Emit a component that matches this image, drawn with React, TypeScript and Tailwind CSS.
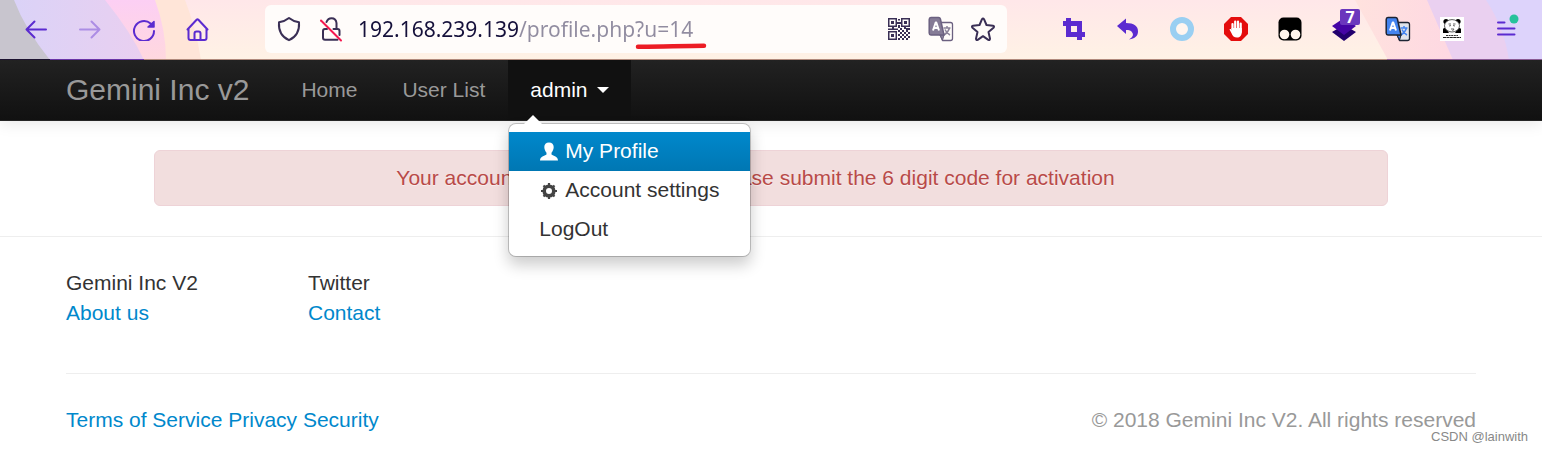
import { useState } from 'react';
import type { ReactNode } from 'react';

const ThemeArt = () => (
  <div className="absolute inset-0 overflow-hidden bg-linear-to-b from-[#ffe7e9] to-[#fff2e5] flex justify-between" aria-hidden="true">
    <svg width="204" height="60" viewBox="0 0 204 60" className="shrink-0">
      <defs>
        <linearGradient id="lavender" x1="0" y1="0" x2="1" y2="0">
          <stop offset="0" stopColor="#d9d3f8" />
          <stop offset="1" stopColor="#e9cff0" />
        </linearGradient>
        <linearGradient id="pink" x1="0" y1="0" x2="0" y2="1">
          <stop offset="0" stopColor="#fccff4" />
          <stop offset="1" stopColor="#ffd8de" />
        </linearGradient>
      </defs>
      <path d="M0 0H185Q196 28 201 60H0Z" fill="#ffe5d8" />
      <path d="M0 0H155Q166 30 166 60H0Z" fill="url(#pink)" />
      <path d="M0 0H105Q131 32 144 60H0Z" fill="url(#lavender)" />
      <path d="M0 0H14Q25 29 50 60H0Z" fill="#c8c5ce" />
    </svg>
    <svg width="192" height="60" viewBox="0 0 192 60" className="shrink-0">
      <defs>
        <linearGradient id="rose" x1="0" y1="0" x2="1" y2="0">
          <stop offset="0" stopColor="#ffe2de" />
          <stop offset="1" stopColor="#fdcfe6" />
        </linearGradient>
      </defs>
      <path d="M5 0H192V60H38Z" fill="url(#rose)" />
      <path d="M77 0H192V60H103Z" fill="#ead0f0" />
      <path d="M136 0H192V60H159Q154 27 136 0Z" fill="#ddd3fb" />
    </svg>
    <div className="absolute inset-x-0 bottom-0 h-px bg-[#b18a7c]" />
    <div className="absolute left-0 bottom-0 h-px w-[50px] bg-[#1c1230]" />
    <div className="absolute left-[50px] bottom-0 h-px w-[94px] bg-[#6b35a8]" />
    <div className="absolute right-0 bottom-0 h-px w-[155px] bg-[#8a5a94]" />
  </div>
);

const ToolButton = ({ label, children }: { label: string; children: ReactNode }) => (
  <button type="button" aria-label={label} className="flex h-12 w-[54px] shrink-0 items-center justify-center">
    {children}
  </button>
);

const FieldButton = ({ label, children }: { label: string; children: ReactNode }) => (
  <button type="button" aria-label={label} className="flex h-12 w-[42px] shrink-0 items-center justify-center">
    {children}
  </button>
);

const line = { fill: 'none', strokeLinecap: 'round', strokeLinejoin: 'round', strokeWidth: 2 } as const;

const Back = () => (
  <svg width="24" height="24" viewBox="0 0 24 24" stroke="#5b2bd0" {...line}>
    <path d="M22 12.500H2.500M10.500 4.500L2.500 12.500L10.500 20.500" />
  </svg>
);

const Forward = () => (
  <svg width="24" height="24" viewBox="0 0 24 24" stroke="#5b2bd0" opacity=".4" {...line}>
    <path d="M2 12.500H21.500M13.500 4.500L21.500 12.500L13.500 20.500" />
  </svg>
);

const Reload = () => (
  <svg width="24" height="24" viewBox="0 0 24 24" stroke="#5b2bd0" {...line}>
    <path d="M22 14A10 10 0 1 1 18.600 6.500" />
    <path d="M22 4.500V10H16Z" fill="#5b2bd0" strokeWidth="1.500" />
  </svg>
);

const Home = () => (
  <svg width="24" height="24" viewBox="0 0 24 24" stroke="#5b2bd0" {...line}>
    <path d="M1.500 12.500L10.600 2.800Q11.500 2 12.400 2.800L21.500 12.500M2.500 11.500V21A2 2 0 0 0 4.500 23H18.500A2 2 0 0 0 20.500 21V11.500M8.500 22.500V16.500A2 2 0 0 1 10.500 14.500H12.500A2 2 0 0 1 14.500 16.500V22.500" />
  </svg>
);

const Shield = () => (
  <svg width="24" height="26" viewBox="0 0 24 26" stroke="#3a2f55" {...line}>
    <path d="M12 2C9 4.500 6 5.600 2 6.200C1.500 13 4 20.500 12 24.200C20 20.500 22.500 13 22 6.200C18 5.600 15 4.500 12 2Z" />
  </svg>
);

const LockOff = () => (
  <svg width="24" height="26" viewBox="0 0 24 26" stroke="#3a2f55" {...line}>
    <path d="M7.500 6Q9 2.200 12.500 2.200Q17 2.200 17.500 7V12.500" />
    <path d="M14.500 13H18.500A2 2 0 0 1 20.500 15V19M8 13H6A2 2 0 0 0 4 15V21.800A2 2 0 0 0 6 23.800H18.500" />
    <path d="M2 4.500L22 24.500" stroke="#f5174f" />
  </svg>
);

const QrCode = () => (
  <svg width="22" height="22" viewBox="0 0 22 22" fill="#3a2f55">
    <path fillRule="evenodd" d="M0 0H9V9H0ZM1.500 1.500V7.500H7.500V1.500ZM13 0H22V9H13ZM14.500 1.500V7.500H20.500V1.500ZM0 13H9V22H0ZM1.500 14.500V20.500H7.500V14.500Z" />
    <path d="M3 3H6V6H3ZM16 3H19V6H16ZM3 16H6V19H3ZM10 1H12V2.500H10ZM9 4H13V6H9ZM10 7H12V10H10ZM4 9H6V11H4ZM16 9H18V11H16ZM0 10.500H10V12H0ZM12 10H14V12H12ZM18 10H22V12H18ZM10 12H12V14H10ZM14 12H16V14H14ZM18 12H20V14H18ZM12 14H14V16H12ZM16 14H18V16H16ZM20 14H22V16H20ZM10 16H12V18H10ZM14 16H16V18H14ZM18 16H20V18H18ZM12 18H14V20H12ZM16 18H18V20H16ZM20 18H22V20H20ZM10 20H12V22H10ZM14 20H16V22H14ZM18 20H20V22H18Z" />
  </svg>
);

const Translate = ({ front, back, edge, mark }: { front: string; back: string; edge: string; mark: string }) => (
  <svg width="26" height="26" viewBox="0 0 26 26" strokeLinejoin="round">
    <path d="M11 6.500H22.500A2 2 0 0 1 24.500 8.500V22.500A2 2 0 0 1 22.500 24.500H14.500L11 16Z" fill={back} stroke={edge} strokeWidth="1.300" />
    <path d="M15.500 12H22.500M19 10V12M21.500 12C20.500 15.500 18.500 17.500 16 19M17 13.500C18 16 20 18 22 19" fill="none" stroke={mark} strokeWidth="1.500" />
    <path d="M12 19H16L14.500 24.200Z" fill={mark} stroke={edge} strokeWidth="1" />
    <path d="M3 1.500H10.500A2 2 0 0 1 12.400 3L16 19H3A2 2 0 0 1 1.200 17V3.500A2 2 0 0 1 3 1.500Z" fill={front} stroke={edge} strokeWidth="1.500" />
    <path d="M5 14.500L7.700 6.500H8.300L11 14.500M6 12H10" fill="none" stroke="#fff" strokeWidth="2" />
  </svg>
);

const Star = () => (
  <svg width="26" height="26" viewBox="0 0 26 26" stroke="#3a2f55" {...line}>
    <path d="M12 3.200Q13 1.600 14 3.200L16.500 9L23 9.800Q24.800 10.300 23.500 11.700L18.500 16L20 22.600Q20 24.500 18.300 23.800L13 20.200L7.700 23.800Q6 24.500 6 22.600L7.500 16L2.500 11.700Q1.200 10.300 3 9.800L9.500 9Z" />
  </svg>
);

const Crop = () => (
  <svg width="22" height="22" viewBox="0 0 22 22" fill="#5b2bd0">
    <path fillRule="evenodd" d="M3 0H8V3H19V14H22V19H19V22H14V19H3V8H0V3H3ZM8 8V14H14V8Z" />
  </svg>
);

const Undo = () => (
  <svg width="22" height="22" viewBox="0 0 22 22" fill="#5b2bd0">
    <path d="M0 8L9 0.500V5C17 5 21 8 21 13.500C21 18 18 20.500 12 21.500C16 19 16.500 17 15.500 15C14.500 12.500 12 12 9 12V16Z" />
  </svg>
);

const Ring = () => (
  <svg width="26" height="26" viewBox="0 0 26 26">
    <circle cx="13" cy="13" r="9" fill="#fff5ef" stroke="#9acff2" strokeWidth="6" />
  </svg>
);

const StopHand = () => (
  <svg width="24" height="24" viewBox="0 0 24 24">
    <path d="M7 0H17L24 7V17L17 24H7L0 17V7Z" fill="#e40d0d" />
    <path d="M8.500 7V14M11.200 4.500V13M14 4.500V13M16.700 6.500V15" stroke="#fff" strokeWidth="2.200" strokeLinecap="round" />
    <path d="M7.400 11H17.800V15C17.800 18.500 16 20.500 13 20.500C10 20.500 8.600 19 7.400 16L5.500 12.500C6.500 11.500 7 12.300 8 13.500Z" fill="#fff" />
  </svg>
);

const Monkey = () => (
  <svg width="24" height="24" viewBox="0 0 24 24">
    <rect x=".5" y=".5" width="23" height="23" rx="5" fill="#000" />
    <circle cx="6.500" cy="17.500" r="4.800" fill="#fff5ec" />
    <circle cx="17.500" cy="17.500" r="4.800" fill="#fff5ec" />
  </svg>
);

const Layers = () => (
  <svg width="24" height="24" viewBox="0 0 24 24">
    <path d="M0 15L12 8L24 15L12 24Z" fill="#22006e" />
    <path d="M0 9L12 1L24 9L12 18Z" fill="#4505a5" />
  </svg>
);

const Panda = () => (
  <svg width="24" height="24" viewBox="0 0 24 24">
    <rect width="24" height="24" fill="#fff" />
    <circle cx="6" cy="4.500" r="2.600" />
    <circle cx="18" cy="4.500" r="2.600" />
    <path d="M3 16V12Q4 10.500 6 11.500L9 16ZM21 16V12Q20 10.500 18 11.500L15 16Z" />
    <ellipse cx="12" cy="8.800" rx="7.500" ry="6.200" fill="#fff" stroke="#333" strokeWidth=".8" />
    <path d="M8.500 7H11M13 7H15.500M9 9L11 8.500M13 8.500L15 9M11 12H14L12.500 14" fill="none" stroke="#666" strokeWidth="1" />
    <path d="M6 18.500H18" stroke="#333" strokeWidth="1" strokeDasharray="2 .6" />
    <path d="M3 20.500H21" stroke="#222" strokeWidth="1.200" strokeDasharray="3 .4" />
  </svg>
);

const Menu = () => (
  <svg width="24" height="24" viewBox="0 0 24 24" className="overflow-visible" stroke="#5b2bd0" {...line}>
    <path d="M4 5.500H10.500M4 11.500H20.500M4 17.500H20.500" />
    <circle cx="20" cy="2" r="4.500" fill="#26c29b" stroke="none" />
  </svg>
);

const UserIcon = () => (
  <svg width="21" height="21" viewBox="0 0 21 21" fill="#fff">
    <path d="M10 1.500C13 1.500 14.700 3.300 14.700 6C14.700 8.500 13.500 10.500 12.500 11.800V13.500C14.500 15 19 15.500 19 19.500H1C1 15.500 5.500 15 7.500 13.500V11.800C6.500 10.500 5.300 8.500 5.300 6C5.300 3.300 7 1.500 10 1.500Z" />
  </svg>
);

const CogIcon = () => (
  <svg width="21" height="21" viewBox="0 0 21 21" fill="none" stroke="#444">
    <circle cx="10" cy="11" r="4.800" strokeWidth="3.600" />
    <path d="M10 3V6M10 16V19M2 11H5M15 11H18M4.500 5.500L6.500 7.500M13.500 14.500L15.500 16.500M4.500 16.500L6.500 14.500M13.500 7.500L15.500 5.500" strokeWidth="2.200" />
  </svg>
);

const BrowserBar = () => {
  const [url, setUrl] = useState('192.168.239.139/profile.php?u=14');

  return (
    <div className="relative h-[60px]">
      <ThemeArt />
      <div className="relative flex items-center gap-10 px-[9px] pt-[5px]">
        <div className="flex">
          <ToolButton label="Back"><Back /></ToolButton>
          <ToolButton label="Forward"><Forward /></ToolButton>
          <ToolButton label="Reload"><Reload /></ToolButton>
          <ToolButton label="Home"><Home /></ToolButton>
        </div>
        <div className="relative flex h-12 min-w-0 flex-1 items-center rounded-md bg-[#fffcfa] px-[3px]">
          <FieldButton label="Tracking protection"><Shield /></FieldButton>
          <FieldButton label="Connection not secure"><LockOff /></FieldButton>
          <input
            type="text"
            aria-label="Address"
            value={url}
            onChange={(e) => setUrl(e.target.value)}
            className="ml-1.5 h-10 min-w-0 flex-1 bg-linear-to-r from-[#15103a] from-[161px] to-[#918ca0] to-[161px] bg-clip-text font-['Noto_Sans',sans-serif] text-[21px] text-transparent outline-none"
          />
          <svg width="72" height="8" viewBox="0 0 72 8" className="absolute left-[370px] top-[37px]" aria-hidden="true">
            <path d="M3 4.800C20 5 45 4 69 3.800" fill="none" stroke="#ec1c24" strokeWidth="4.500" strokeLinecap="round" />
          </svg>
          <FieldButton label="QR code"><QrCode /></FieldButton>
          <FieldButton label="Translate page">
            <Translate front="#857b96" back="#fffcfa" edge="#6b6080" mark="#8b8299" />
          </FieldButton>
          <FieldButton label="Bookmark"><Star /></FieldButton>
        </div>
        <div className="flex">
          <ToolButton label="Crop"><Crop /></ToolButton>
          <ToolButton label="Undo"><Undo /></ToolButton>
          <ToolButton label="Proxy"><Ring /></ToolButton>
          <ToolButton label="Ad blocker"><StopHand /></ToolButton>
          <ToolButton label="User scripts"><Monkey /></ToolButton>
          <ToolButton label="Technologies">
            <span className="relative">
              <Layers />
              <span className="absolute -top-2 left-2 flex h-4 w-5 items-center justify-center rounded-xs bg-[#6b37bd] font-['Open_Sans',sans-serif] text-base leading-4 font-bold text-white">
                7
              </span>
            </span>
          </ToolButton>
          <ToolButton label="Translate">
            <Translate front="#4384f0" back="#e0e3ea" edge="#1d2433" mark="#4384f0" />
          </ToolButton>
          <ToolButton label="Panda"><Panda /></ToolButton>
          <ToolButton label="Menu"><Menu /></ToolButton>
        </div>
      </div>
    </div>
  );
};

const UserMenu = () => (
  <div className="absolute left-0 top-[63px] z-10 w-max min-w-[243px] rounded-lg border border-black/20 bg-white bg-clip-padding pt-2 pb-[7px] text-[#333] shadow-[0_8px_15px_rgba(0,0,0,0.2)]">
    <svg width="18" height="9" viewBox="0 0 18 9" className="absolute -top-[9px] left-[15px]" aria-hidden="true">
      <path d="M0 9L9 0L18 9Z" fill="#fff" />
    </svg>
    <a href="#profile" className="flex h-[39px] items-center gap-[5px] bg-linear-to-b from-[#0088cc] to-[#0077b3] px-[30px] pb-px text-white">
      <UserIcon />
      My Profile
    </a>
    <a href="#settings" className="flex h-[39px] items-center gap-[5px] px-[30px] pb-px">
      <CogIcon />
      Account settings
    </a>
    <a href="#logout" className="flex h-[39px] items-center px-[30px] pb-px">LogOut</a>
  </div>
);

const Navbar = () => {
  const [open, setOpen] = useState(true);

  return (
    <nav className="border-b border-[#252525] bg-linear-to-b from-[#222] to-[#111] px-[66px] text-[#999] shadow-[0_2px_15px_rgba(0,0,0,0.1)]">
      <div className="mx-auto flex h-[60px] max-w-[1410px] items-center">
        <a href="#top" className="mr-[30px] text-[30px]">Gemini Inc v2</a>
        <div className="flex gap-px">
          <a href="#home" className="px-[22px] py-[15px]">Home</a>
          <a href="#users" className="px-[22px] py-[15px]">User List</a>
          <div className="relative">
            <button
              type="button"
              aria-expanded={open}
              onClick={() => setOpen(!open)}
              className="flex items-center gap-[9px] bg-[#111] px-[22px] py-[15px] text-white"
            >
              admin
              <svg width="12" height="6" viewBox="0 0 12 6" aria-hidden="true">
                <path d="M0 0H12L6 6Z" fill="#fff" />
              </svg>
            </button>
            {open && <UserMenu />}
          </div>
        </div>
      </div>
    </nav>
  );
};

export default function App() {
  return (
    <div className="relative bg-white font-['Liberation_Sans',Arial,sans-serif] text-[21px] leading-[30px] text-[#333]">
      <BrowserBar />
      <Navbar />
      <main className="px-[66px] pt-[29px] pb-[30px]">
        <div className="mx-auto max-w-[1410px] px-[88px]">
          <div role="alert" className="rounded-md border border-[#eed3d7] bg-[#f2dede] py-3 pr-[52px] pl-[21px] text-center text-[#b94a48] text-shadow-[0_1px_0_rgba(255,255,255,0.5)]">
            Your account is not activated yet. Please submit the 6 digit code for activation
          </div>
        </div>
      </main>
      <footer className="border-t border-[#eee] px-[66px] pt-[31px]">
        <div className="mx-auto max-w-[1410px]">
          <div className="flex pb-[45px]">
            <div className="w-[242px]">
              <p>Gemini Inc V2</p>
              <a href="#about" className="text-[#0088cc]">About us</a>
            </div>
            <div className="w-[242px]">
              <p>Twitter</p>
              <a href="#contact" className="text-[#0088cc]">Contact</a>
            </div>
          </div>
          <div className="flex justify-between border-t border-[#eee] pt-[31px] pb-4">
            <p className="text-[#0088cc]">
              <a href="#terms">Terms of Service</a> <a href="#privacy">Privacy</a> <a href="#security">Security</a>
            </p>
            <p className="text-[#999]">© 2018 Gemini Inc V2. All rights reserved</p>
          </div>
        </div>
      </footer>
      <span className="absolute right-[14px] bottom-1 text-[13px] leading-5 text-[#888]">CSDN @lainwith</span>
    </div>
  );
}
